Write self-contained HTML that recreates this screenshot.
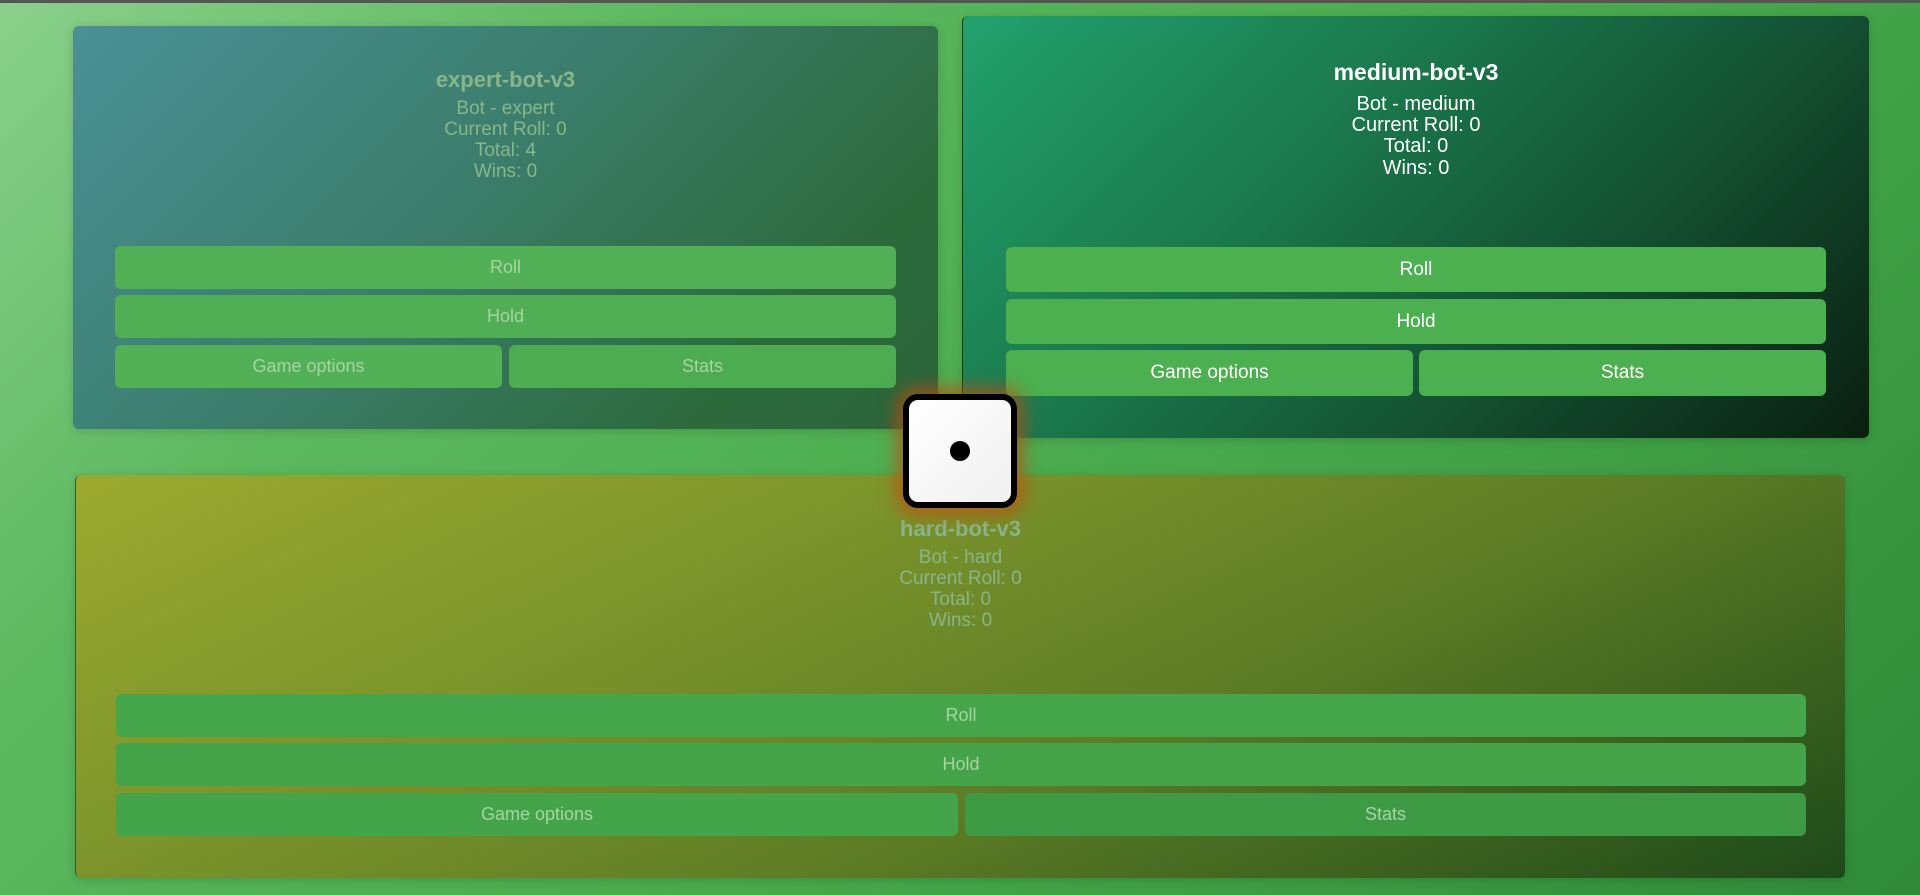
<!DOCTYPE html>
<html><head><meta charset="utf-8"><style>
*{margin:0;padding:0;box-sizing:border-box}
html,body{width:1920px;height:895px;overflow:hidden}
body{position:relative;font-family:"Liberation Sans",sans-serif;background:linear-gradient(135deg,#8ad08c 0%,#5cb85f 25%,#4cae50 50%,#3e9e44 75%,#2f8a38 100%)}
.topbar{position:absolute;left:0;top:0;width:1920px;height:3px;background:#555}
.panel{position:absolute;border-radius:6px;text-align:center;box-shadow:0 2px 10px rgba(0,0,0,.15)}
.t{position:absolute;left:0;right:0;font-weight:bold;font-size:22px}
.l{position:absolute;left:0;right:0;font-size:19px;line-height:21px}
.btn{position:absolute;background:#4caf50;border-radius:6px;font-size:18px;display:flex;align-items:center;justify-content:center}
.dim .t,.dim .l{color:#88b68a}
.dim .btn{color:#a6d5a2}
</style></head><body>
<div class="topbar"></div>

<div class="panel dim" style="left:73px;top:26px;width:865px;height:403px;background:linear-gradient(135deg,#4a9096 0%,#3b7d6a 45%,#2c6a3c 80%,#2a653a 100%);">
  <div class="t" style="top:41px">expert-bot-v3</div>
  <div class="l" style="top:72px">Bot - expert</div>
  <div class="l" style="top:93px">Current Roll: 0</div>
  <div class="l" style="top:114px">Total: 4</div>
  <div class="l" style="top:135px">Wins: 0</div>
  <div class="btn" style="left:42px;top:220px;width:781px;height:43px;background:#52b057">Roll</div>
  <div class="btn" style="left:42px;top:269px;width:781px;height:43px;background:#50ae55">Hold</div>
  <div class="btn" style="left:42px;top:319px;width:387px;height:43px;background:#52b057">Game options</div>
  <div class="btn" style="left:436px;top:319px;width:387px;height:43px;background:#4dab52">Stats</div>
</div>

<div class="panel" style="left:962px;top:16px;width:907px;height:422px;border-left:1px solid #0e3a1a;background:linear-gradient(135deg,#22a26d 0%,#1b7a4e 35%,#145233 65%,#0a1f10 100%);color:#fff">
  <div class="t" style="top:43px;font-size:23px">medium-bot-v3</div>
  <div class="l" style="top:78px;font-size:20px">Bot - medium</div>
  <div class="l" style="top:99px;font-size:20px">Current Roll: 0</div>
  <div class="l" style="top:120px;font-size:20px">Total: 0</div>
  <div class="l" style="top:142px;font-size:20px">Wins: 0</div>
  <div class="btn" style="left:43px;top:231px;width:820px;height:45px;color:#fff;font-size:19px">Roll</div>
  <div class="btn" style="left:43px;top:283px;width:820px;height:45px;color:#fff;font-size:19px">Hold</div>
  <div class="btn" style="left:43px;top:334px;width:407px;height:46px;color:#fff;font-size:19px">Game options</div>
  <div class="btn" style="left:456px;top:334px;width:407px;height:46px;color:#fff;font-size:19px">Stats</div>
</div>

<div class="panel dim" style="left:75px;top:475px;width:1770px;height:403px;border-left:1px solid #3e5a1a;background:linear-gradient(155deg,#9ba92e 0%,#7f962c 30%,#5e7d25 60%,#1e4a1a 100%);">
  <div class="t" style="top:41px">hard-bot-v3</div>
  <div class="l" style="top:72px">Bot - hard</div>
  <div class="l" style="top:93px">Current Roll: 0</div>
  <div class="l" style="top:114px">Total: 0</div>
  <div class="l" style="top:135px">Wins: 0</div>
  <div class="btn" style="left:40px;top:219px;width:1690px;height:43px;background:#46a64b">Roll</div>
  <div class="btn" style="left:40px;top:268px;width:1690px;height:43px;background:#45a44a">Hold</div>
  <div class="btn" style="left:40px;top:318px;width:842px;height:43px;background:#44a449">Game options</div>
  <div class="btn" style="left:889px;top:318px;width:841px;height:43px;background:#3f9a45">Stats</div>
</div>

<div style="position:absolute;left:903px;top:394px;width:114px;height:114px;border:6px solid #000;border-radius:15px;background:linear-gradient(135deg,#fff,#f0f0f0);box-shadow:0 0 16px 8px rgba(200,70,10,.6)">
  <div style="position:absolute;left:41px;top:41px;width:20px;height:20px;border-radius:50%;background:#000"></div>
</div>
</body></html>
